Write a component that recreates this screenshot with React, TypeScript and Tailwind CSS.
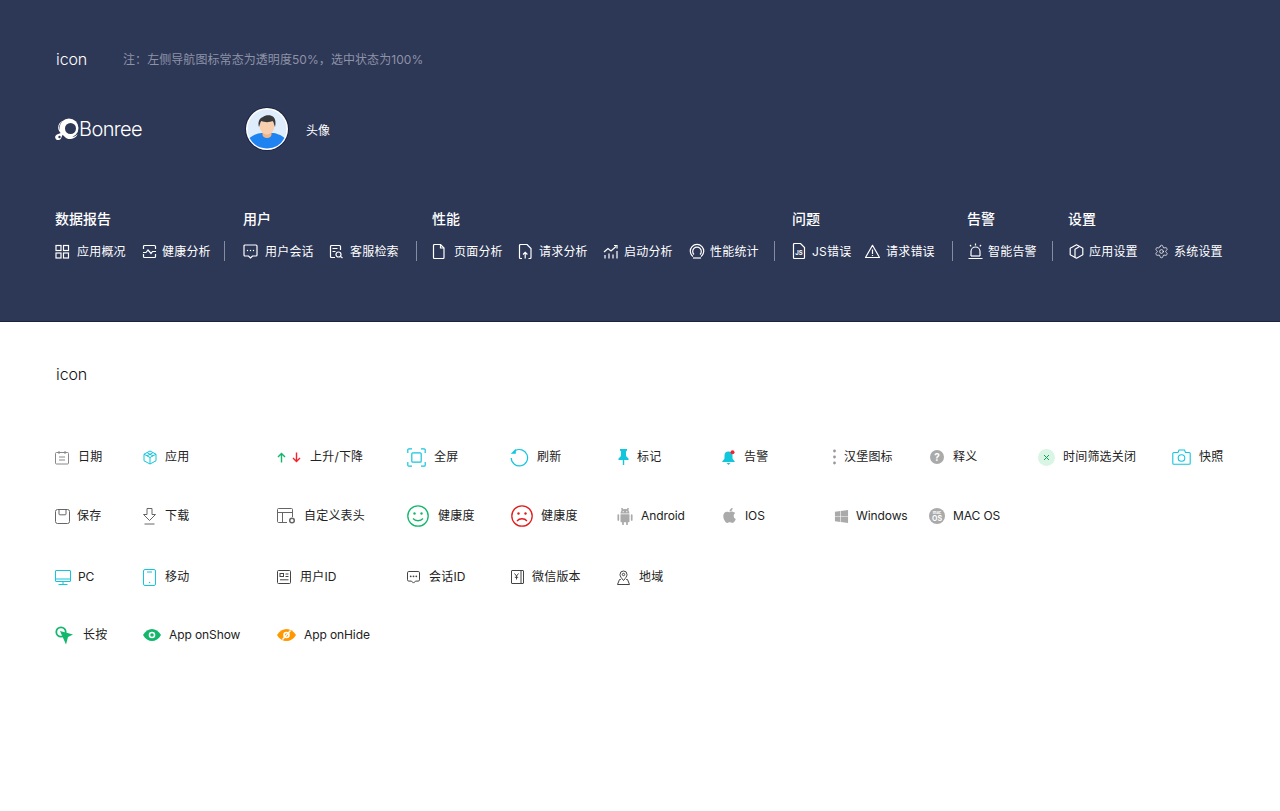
import type { ReactNode } from "react";
import { FaApple, FaWindows } from "react-icons/fa";
import { Settings } from "lucide-react";

const Ico = ({ w = 16, h = 16, vb, children }: { w?: number; h?: number; vb?: string; children: ReactNode }) => (
  <svg width={w} height={h} viewBox={vb ?? `0 0 ${w} ${h}`} fill="none" stroke="currentColor" strokeWidth="1" className="shrink-0">
    {children}
  </svg>
);

const navIcons = {
  grid: (
    <Ico w={15} h={15}>
      <rect x="1" y="1.500" width="5" height="5" />
      <rect x="8.500" y="1.500" width="5" height="5" />
      <rect x="1" y="9" width="5" height="5" />
      <rect x="8.500" y="9" width="5" height="5" />
    </Ico>
  ),
  health: (
    <Ico w={15} h={15}>
      <path d="M1.500 5V2.500a1 1 0 0 1 1-1h10a1 1 0 0 1 1 1V5M1.500 10v2.500a1 1 0 0 0 1 1h10a1 1 0 0 0 1-1V10" />
      <path d="M1 8.500h3l2-2.500 3 3.500 1.500-2H14" />
    </Ico>
  ),
  chat: (
    <Ico w={15} h={15}>
      <path d="M2 1h11a1 1 0 0 1 1 1v9a1 1 0 0 1-1 1H9.500l-2 2-2-2H2a1 1 0 0 1-1-1V2a1 1 0 0 1 1-1z" />
      <circle cx="4.500" cy="6.500" r=".7" fill="currentColor" stroke="none" />
      <circle cx="7.500" cy="6.500" r=".7" fill="currentColor" stroke="none" />
      <circle cx="10.500" cy="6.500" r=".7" fill="currentColor" stroke="none" />
    </Ico>
  ),
  search: (
    <Ico w={15} h={15}>
      <path d="M6 13.500H2.500a1 1 0 0 1-1-1v-10a1 1 0 0 1 1-1h8a1 1 0 0 1 1 1V6" />
      <path d="M3.500 4.500h5M3.500 7.500h3" />
      <circle cx="9.500" cy="10.500" r="2.500" />
      <path d="M11.500 12.500l2 1.500" />
    </Ico>
  ),
  page: (
    <Ico w={14} h={15}>
      <path d="M1.500 1.500a1 1 0 0 1 1-1h6l3.500 3.500v9.500a1 1 0 0 1-1 1h-8.500a1 1 0 0 1-1-1z" />
      <path d="M8.500 .5V4H12" />
    </Ico>
  ),
  upload: (
    <Ico w={15} h={15}>
      <path d="M4 14.500H2.500a1 1 0 0 1-1-1V1.500a1 1 0 0 1 1-1h6.500L13 4.500v9a1 1 0 0 1-1 1h-1.500" />
      <path d="M7.200 14.500V8.500M5 10.500l2.200-2.200 2.200 2.200" />
    </Ico>
  ),
  launch: (
    <Ico w={16} h={15}>
      <path d="M1 8l4-3.500 3 2.500 5-4.500" />
      <path d="M11 1.500h3v3" />
      <path d="M2 11v3.500M6 9.500v5M10 10.500v4M14 7v7.500" />
    </Ico>
  ),
  ring: (
    <Ico w={16} h={16}>
      <path d="M4 13.500A6.700 6.700 0 1 1 12 13.500" />
      <path d="M5 11.500A4.300 4.300 0 1 1 11 11.500" />
      <path d="M4 15h8" />
    </Ico>
  ),
  js: (
    <Ico w={14} h={16}>
      <path d="M1.500 1.500a1 1 0 0 1 1-1h6l4 4v10a1 1 0 0 1-1 1h-9a1 1 0 0 1-1-1z" />
      <text x="3.200" y="12.300" fontSize="6" fontWeight="700" fill="currentColor" stroke="none">JS</text>
    </Ico>
  ),
  warn: (
    <Ico w={15} h={15}>
      <path d="M7.500 1.300L14.500 13.500H.5z" strokeLinejoin="round" />
      <path d="M7.500 5.500v4.500M7.500 11v1" />
    </Ico>
  ),
  alarm: (
    <Ico w={15} h={17}>
      <path d="M3 13V8.500a4.500 4.500 0 0 1 9 0V13" />
      <path d="M.5 15.500h14M7.500 .5v2M2 2l1.200 1.400M13 2l-1.200 1.400" />
      <path d="M3 13h9" />
    </Ico>
  ),
  hex: (
    <Ico w={15} h={15}>
      <path d="M7.500 .8L13.800 4.200V10.800L7.500 14.200 1.200 10.800V4.200z" strokeLinejoin="round" />
      <path d="M10.500 2.500L6 5.300v8.200" />
    </Ico>
  ),
  gear: <Settings size={15} strokeWidth={1.3} className="shrink-0" />,
};

type NavItem = { icon: ReactNode; label: string; box: string };
type NavGroup = { title: string; width: string; items: NavItem[]; sep: boolean };

const groups: NavGroup[] = [
  {
    title: "数据报告",
    width: "w-[188px]",
    sep: true,
    items: [
      { icon: navIcons.grid, label: "应用概况", box: "w-[87px] gap-[7px]" },
      { icon: navIcons.health, label: "健康分析", box: "w-[82px] gap-[5px]" },
    ],
  },
  {
    title: "用户",
    width: "w-[189px]",
    sep: true,
    items: [
      { icon: navIcons.chat, label: "用户会话", box: "w-[86px] gap-[7px]" },
      { icon: navIcons.search, label: "客服检索", box: "w-[87px] gap-[6px]" },
    ],
  },
  {
    title: "性能",
    width: "w-[360px]",
    sep: true,
    items: [
      { icon: navIcons.page, label: "页面分析", box: "w-[86px] gap-[8px]" },
      { icon: navIcons.upload, label: "请求分析", box: "w-[85px] gap-[6px]" },
      { icon: navIcons.launch, label: "启动分析", box: "w-[86px] gap-[5px]" },
      { icon: navIcons.ring, label: "性能统计", box: "w-[85px] gap-[5px]" },
    ],
  },
  {
    title: "问题",
    width: "w-[175px]",
    sep: true,
    items: [
      { icon: navIcons.js, label: "JS错误", box: "w-[73px] gap-[6px]" },
      { icon: navIcons.warn, label: "请求错误", box: "w-[87px] gap-[6px]" },
    ],
  },
  {
    title: "告警",
    width: "w-[101px]",
    sep: true,
    items: [{ icon: navIcons.alarm, label: "智能告警", box: "w-[85px] gap-[5px] pl-[1px]" }],
  },
  {
    title: "设置",
    width: "w-[170px]",
    sep: false,
    items: [
      { icon: navIcons.hex, label: "应用设置", box: "w-[86px] gap-[5px] pl-[1px]" },
      { icon: navIcons.gear, label: "系统设置", box: "w-[85px] gap-[5px]" },
    ],
  },
];

const cyan = "text-[#12c6dc]";

type Cell = { icon: ReactNode; label: string; gap: string; col: string };

const cells: Cell[] = [
  // row 1
  {
    col: "col-start-1",
    label: "日期",
    gap: "gap-[9px]",
    icon: (
      <span className="text-[#888]">
        <Ico w={14} h={15}>
          <rect x=".5" y="2.500" width="13" height="11.500" rx="1" />
          <path d="M4 1v3M10 1v3M4 7h6M4 10h6" />
        </Ico>
      </span>
    ),
  },
  {
    col: "col-start-2",
    label: "应用",
    gap: "gap-[8px]",
    icon: (
      <span className={cyan}>
        <Ico w={14} h={15}>
          <path d="M7 1l6 3.200v6.600L7 14l-6-3.200V4.200z" strokeLinejoin="round" />
          <path d="M1 4.200L7 7.500l6-3.300M7 7.500V14M4 2.600l6 3.300M10 2.600L4 5.900" />
        </Ico>
      </span>
    ),
  },
  {
    col: "col-start-3",
    label: "上升/下降",
    gap: "gap-[9px]",
    icon: (
      <span className="flex w-[24px] items-center justify-between">
        <span className="text-[#12b76a]">
          <Ico w={9} h={11}>
            <path d="M4.500 10.500V1.500M1 5l3.500-3.500L8 5" strokeWidth="1.400" />
          </Ico>
        </span>
        <span className="text-[#f5222d]">
          <Ico w={9} h={11}>
            <path d="M4.500 .5v9M1 6l3.500 3.500L8 6" strokeWidth="1.400" />
          </Ico>
        </span>
      </span>
    ),
  },
  {
    col: "col-start-4",
    label: "全屏",
    gap: "gap-[8px]",
    icon: (
      <span className={cyan}>
        <Ico w={19} h={19}>
          <path d="M.8 5V1.800a1 1 0 0 1 1-1H5M14 .8h3.200a1 1 0 0 1 1 1V5M18.200 14v3.200a1 1 0 0 1-1 1H14M5 18.200H1.800a1 1 0 0 1-1-1V14" strokeWidth="1.200" />
          <rect x="4.800" y="4.800" width="9.400" height="9.400" rx="1" strokeWidth="1.200" />
        </Ico>
      </span>
    ),
  },
  {
    col: "col-start-5",
    label: "刷新",
    gap: "gap-[8px]",
    icon: (
      <span className={cyan}>
        <Ico w={19} h={19}>
          <path d="M5 2.800A8.200 8.200 0 1 1 1.200 10" strokeWidth="1.200" />
          <path d="M.7 5.800L5.800.8v5z" fill="currentColor" stroke="none" />
        </Ico>
      </span>
    ),
  },
  {
    col: "col-start-6",
    label: "标记",
    gap: "gap-[8px]",
    icon: (
      <span className={`${cyan} pl-[1px]`}>
        <Ico w={11} h={16}>
          <path d="M2 0h7v1.500L8 2.500V7l2.500 2.500V11H6.200v5H4.800v-5H.5V9.500L3 7V2.500L2 1.500z" fill="currentColor" stroke="none" />
        </Ico>
      </span>
    ),
  },
  {
    col: "col-start-7",
    label: "告警",
    gap: "gap-[8px]",
    icon: (
      <span className={`${cyan} pl-[1px]`}>
        <Ico w={14} h={15}>
          <path d="M6.500 1.500a4 4 0 0 1 4 4v3l2.500 3.500H0L2.500 8.500v-3a4 4 0 0 1 4-4z" fill="currentColor" stroke="none" />
          <path d="M4.500 13h4L6.500 15z" fill="currentColor" stroke="none" />
          <circle cx="10.500" cy="2.300" r="2" fill="#f5222d" stroke="none" />
        </Ico>
      </span>
    ),
  },
  {
    col: "col-start-8",
    label: "汉堡图标",
    gap: "gap-[8px]",
    icon: (
      <span className="text-[#999]">
        <Ico w={3} h={16}>
          <circle cx="1.500" cy="2" r="1.400" fill="currentColor" stroke="none" />
          <circle cx="1.500" cy="8" r="1.400" fill="currentColor" stroke="none" />
          <circle cx="1.500" cy="14" r="1.400" fill="currentColor" stroke="none" />
        </Ico>
      </span>
    ),
  },
  {
    col: "col-start-9",
    label: "释义",
    gap: "gap-[9px]",
    icon: (
      <span className="ml-[1px] flex size-[14px] items-center justify-center rounded-full bg-[#aaa] text-[10px] leading-none font-bold text-white">
        ?
      </span>
    ),
  },
  {
    col: "col-start-10",
    label: "时间筛选关闭",
    gap: "gap-[8px]",
    icon: (
      <span className="flex size-[17px] items-center justify-center rounded-full bg-[#d9f5e6] text-[#12a150]">
        <Ico w={7} h={7}>
          <path d="M1 1l5 5M6 1L1 6" />
        </Ico>
      </span>
    ),
  },
  {
    col: "col-start-11",
    label: "快照",
    gap: "gap-[8px]",
    icon: (
      <span className={cyan}>
        <Ico w={19} h={16}>
          <path d="M1.800 3.500H6L7 1h5.500l1 2.500h3.700a1 1 0 0 1 1 1v9.700a1 1 0 0 1-1 1H1.800a1 1 0 0 1-1-1V4.500a1 1 0 0 1 1-1z" strokeWidth="1.100" />
          <circle cx="9.500" cy="9" r="3.300" strokeWidth="1.100" />
        </Ico>
      </span>
    ),
  },
  // row 2
  {
    col: "col-start-1",
    label: "保存",
    gap: "gap-[7px]",
    icon: (
      <span className="text-[#666]">
        <Ico w={15} h={15}>
          <rect x=".5" y=".5" width="14" height="14" rx="2" />
          <path d="M4 .5V5a.8.8 0 0 0 .8.8h5.400a.8.8 0 0 0 .8-.8V.5" />
        </Ico>
      </span>
    ),
  },
  {
    col: "col-start-2",
    label: "下载",
    gap: "gap-[9px]",
    icon: (
      <span className="text-[#666]">
        <Ico w={13} h={17}>
          <path d="M4 .5h5v6h3.500L6.500 12.500.5 6.500H4z" strokeLinejoin="round" />
          <path d="M1.500 16h10" />
        </Ico>
      </span>
    ),
  },
  {
    col: "col-start-3",
    label: "自定义表头",
    gap: "gap-[8px]",
    icon: (
      <span className="text-[#666]">
        <Ico w={19} h={16}>
          <path d="M10 14.500H1.500a1 1 0 0 1-1-1v-12a1 1 0 0 1 1-1h13a1 1 0 0 1 1 1V9" />
          <path d="M.5 4.500h15M5.500 4.500v10" />
          <circle cx="15" cy="12.500" r="2.300" strokeWidth="1.500" />
        </Ico>
      </span>
    ),
  },
  {
    col: "col-start-4",
    label: "健康度",
    gap: "gap-[9px]",
    icon: (
      <span className="text-[#12b76a]">
        <Ico w={22} h={22}>
          <circle cx="11" cy="11" r="10.200" strokeWidth="1.300" />
          <circle cx="7.500" cy="8.500" r="1.200" fill="currentColor" stroke="none" />
          <circle cx="14.500" cy="8.500" r="1.200" fill="currentColor" stroke="none" />
          <path d="M6 13.500c2.500 3 7.500 3 10 0" strokeWidth="1.300" />
        </Ico>
      </span>
    ),
  },
  {
    col: "col-start-5",
    label: "健康度",
    gap: "gap-[8px]",
    icon: (
      <span className="pl-[1px] text-[#e21b1b]">
        <Ico w={22} h={22}>
          <circle cx="11" cy="11" r="10.200" strokeWidth="1.300" />
          <circle cx="7.500" cy="8.500" r="1.200" fill="currentColor" stroke="none" />
          <circle cx="14.500" cy="8.500" r="1.200" fill="currentColor" stroke="none" />
          <path d="M6 16c2.500-3 7.500-3 10 0" strokeWidth="1.300" />
        </Ico>
      </span>
    ),
  },
  {
    col: "col-start-6",
    label: "Android",
    gap: "gap-[8px]",
    icon: (
      <span className="text-[#aaa]">
        <Ico w={16} h={17}>
          <path d="M3.500 5.500a4.500 4.500 0 0 1 9 0z" fill="currentColor" stroke="none" />
          <path d="M3.500 6.300h9v7.200a.8.8 0 0 1-.8.8H4.300a.8.8 0 0 1-.8-.8z" fill="currentColor" stroke="none" />
          <path d="M1.300 7v5M14.700 7v5M6 14v2.300M10 14v2.300M5 .8l1.300 2M11 .8L9.700 2.800" strokeWidth="1.700" strokeLinecap="round" />
          <circle cx="6.200" cy="3.700" r=".6" fill="#fff" stroke="none" />
          <circle cx="9.800" cy="3.700" r=".6" fill="#fff" stroke="none" />
        </Ico>
      </span>
    ),
  },
  {
    col: "col-start-7",
    label: "IOS",
    gap: "gap-[7px]",
    icon: <FaApple size={17} className="-mt-[1px] text-[#aaa]" />,
  },
  {
    col: "col-start-8",
    label: "Windows",
    gap: "gap-[7px]",
    icon: <FaWindows size={15} className="ml-[1px] text-[#aaa]" />,
  },
  {
    col: "col-start-9",
    label: "MAC OS",
    gap: "gap-[8px]",
    icon: (
      <span className="flex size-[16px] flex-col items-center justify-center rounded-full bg-[#aaa] font-bold text-white">
        <span className="text-[4px] leading-[4px]">mac</span>
        <span className="text-[7px] leading-[7px]">OS</span>
      </span>
    ),
  },
  // row 3
  {
    col: "col-start-1",
    label: "PC",
    gap: "gap-[7px]",
    icon: (
      <span className={cyan}>
        <Ico w={16} h={15}>
          <rect x=".5" y=".5" width="15" height="11" rx=".5" />
          <path d="M.5 9h15M8 11.500V14M3.500 14.500h9" />
        </Ico>
      </span>
    ),
  },
  {
    col: "col-start-2",
    label: "移动",
    gap: "gap-[9px]",
    icon: (
      <span className={cyan}>
        <Ico w={13} h={17}>
          <rect x=".5" y=".5" width="12" height="16" rx="1.500" />
          <path d="M4 3h5" />
          <circle cx="6.500" cy="13.500" r=".7" fill="currentColor" stroke="none" />
        </Ico>
      </span>
    ),
  },
  {
    col: "col-start-3",
    label: "用户ID",
    gap: "gap-[9px]",
    icon: (
      <span className="text-[#444]">
        <Ico w={14} h={14}>
          <rect x=".5" y=".5" width="13" height="13" rx="1" />
          <rect x="3" y="3.500" width="3.500" height="3" />
          <path d="M8.500 4h3M8.500 6.500h3M3 9.800h8.500" />
        </Ico>
      </span>
    ),
  },
  {
    col: "col-start-4",
    label: "会话ID",
    gap: "gap-[9px]",
    icon: (
      <span className="text-[#444]">
        <Ico w={13} h={13}>
          <path d="M1.800.5h9.400a1.300 1.300 0 0 1 1.300 1.300v7a1.300 1.300 0 0 1-1.300 1.300H8.500l-2 2-2-2H1.800A1.300 1.300 0 0 1 .5 8.800v-7A1.300 1.300 0 0 1 1.800.5z" />
          <circle cx="3.700" cy="5.300" r=".9" fill="currentColor" stroke="none" />
          <circle cx="6.500" cy="5.300" r=".9" fill="currentColor" stroke="none" />
          <circle cx="9.300" cy="5.300" r=".9" fill="currentColor" stroke="none" />
        </Ico>
      </span>
    ),
  },
  {
    col: "col-start-5",
    label: "微信版本",
    gap: "gap-[8px]",
    icon: (
      <span className="pl-[1px] text-[#444]">
        <Ico w={13} h={14}>
          <rect x=".5" y=".5" width="12" height="13" rx=".5" />
          <path d="M3.500 3.500l2 2.500 2-2.500M5.500 6v3.500M3.800 7.300h3.400M10 .5v13" />
        </Ico>
      </span>
    ),
  },
  {
    col: "col-start-6",
    label: "地域",
    gap: "gap-[9px]",
    icon: (
      <span className="text-[#444]">
        <Ico w={13} h={15}>
          <path d="M6.500 10.500C4.500 8 3 6.500 3 4.500a3.500 3.500 0 0 1 7 0c0 2-1.500 3.500-3.500 6z" />
          <circle cx="6.500" cy="4.500" r="1.200" />
          <path d="M3.800 9.500H2.500L.5 14.500h12l-2-5H9.200" />
        </Ico>
      </span>
    ),
  },
  // row 4
  {
    col: "col-start-1",
    label: "长按",
    gap: "gap-[9px]",
    icon: (
      <span className="text-[#12b76a]">
        <Ico w={19} h={19}>
          <circle cx="6" cy="6" r="4.700" strokeWidth="1.800" />
          <path d="M5 5l13 3.500-5 2.500-2 7.500z" fill="currentColor" stroke="none" />
        </Ico>
      </span>
    ),
  },
  {
    col: "col-start-2",
    label: "App onShow",
    gap: "gap-[8px]",
    icon: (
      <span className="text-[#12b76a]">
        <Ico w={18} h={12}>
          <path d="M0 6c4.500-8 13.500-8 18 0-4.500 8-13.500 8-18 0z" fill="currentColor" stroke="none" />
          <circle cx="9" cy="6" r="3.300" fill="#fff" stroke="none" />
          <circle cx="9" cy="6" r="1.800" fill="currentColor" stroke="none" />
        </Ico>
      </span>
    ),
  },
  {
    col: "col-start-3",
    label: "App onHide",
    gap: "gap-[8px]",
    icon: (
      <span className="text-[#ff9800]">
        <Ico w={19} h={12}>
          <path d="M0 6c4.500-8 14.500-8 19 0-4.500 8-14.500 8-19 0z" fill="currentColor" stroke="none" />
          <circle cx="9.500" cy="6" r="3.300" fill="#fff" stroke="none" />
          <circle cx="9.500" cy="6" r="1.700" fill="currentColor" stroke="none" />
          <path d="M5.500 10.500l8-9" stroke="#fff" strokeWidth="1.300" />
        </Ico>
      </span>
    ),
  },
];

const Logo = () => (
  <svg width="25" height="23" viewBox="0 0 25 23" className="shrink-0">
    <circle cx="14" cy="10" r="9.500" fill="#fff" />
    <circle cx="15.500" cy="10.500" r="5.500" fill="#2d3756" />
    <path d="M8.500 2.500C5 4.500 3.500 8 4.500 11c.8 2 2.500 3 4 3.500L6 20.500c-1.500 2-4.500 2-5.500 0-1-2 .2-3.500 2-4.300l3.300-1.300C1.500 11.500 2.500 4.500 8.500 2.500z" fill="#fff" />
    <path d="M7 13l7.500 5.500c3 .7 6 .2 8-2.500-.7 3.500-4.500 5-8 5-3.500 0-6-2.500-7.500-8z" fill="#fff" />
    <circle cx="4.500" cy="19" r="1.200" fill="#2d3756" />
  </svg>
);

const Avatar = () => (
  <svg width="44" height="44" viewBox="0 0 44 44" className="shrink-0">
    <circle cx="22" cy="22" r="22" fill="#1c2340" />
    <circle cx="22" cy="22" r="21" fill="#fff" />
    <circle cx="22" cy="22" r="19.500" fill="#deecfb" />
    <path d="M4.500 31c3-3 9-5 12-5h11c3 0 9 2 12 5A20 20 0 0 1 22 41.500 20 20 0 0 1 4.500 31z" fill="#1e82f0" />
    <path d="M17.500 23h9v4.500c0 2-2 3.500-4.500 3.500s-4.500-1.500-4.500-3.500z" fill="#eeb58c" />
    <ellipse cx="22" cy="19" rx="7.500" ry="8.500" fill="#f8cfae" />
    <path d="M14 20c-1.500-5 .5-9 4-10 2-2 8-2.500 10.500 0 2 2 2.500 6 1.500 10-1-2-1-5-2.500-6-3 1.500-8 1.500-11 0-1.500 1-1.500 4-2.500 6z" fill="#38393d" />
  </svg>
);

const isLatin = (s: string) => /^[\x00-\x7f]+$/.test(s);

export default function App() {
  return (
    <div className="min-h-[811px] bg-white font-['Inter','Noto_Sans_CJK_SC',sans-serif] text-[12px]">
      <div className="flex h-[322px] flex-col border-b border-[#1c2340] bg-[#2d3756] pl-[55px]">
        <div className="mt-[49px] flex h-[20px] items-center">
          <span className="w-[68px] pl-[1px] text-[16px] font-light tracking-[-0.1px] text-white">icon</span>
          <span className="pt-[2px] tracking-[0.07px] text-[#8d93a6]">注：左侧导航图标常态为透明度50%，选中状态为100%</span>
        </div>
        <div className="mt-[38px] flex h-[44px] items-center">
          <div className="flex w-[190px] items-center">
            <Logo />
            <span className="-ml-[1px] text-[20px] leading-none font-light tracking-[-0.6px] text-white">Bonree</span>
          </div>
          <div className="-mt-[1px]">
            <Avatar />
          </div>
          <span className="ml-[17px] pt-[3px] text-white">头像</span>
        </div>
        <div className="mt-[57px] flex">
          {groups.map((g) => (
            <div key={g.title} className={g.width}>
              <div className="flex h-[20px] items-center text-[14px] font-medium text-white">{g.title}</div>
              <div className="mt-[13px] flex h-[20px] items-center">
                {g.items.map((it) => (
                  <div key={it.label} className={`flex shrink-0 items-center text-white [&_svg]:stroke-[1.2] ${it.box}`}>
                    {it.icon}
                    <span className="pt-[1px] tracking-[0.2px] whitespace-nowrap">{it.label}</span>
                  </div>
                ))}
                {g.sep && <div className="h-[20px] w-px bg-[#868c9f]" />}
              </div>
            </div>
          ))}
        </div>
      </div>

      <div className="pl-[55px]">
        <div className="mt-[42px] flex h-[20px] items-center pl-[1px] text-[16px] font-light tracking-[-0.1px] text-[#111]">icon</div>
        <div className="mt-[58px] grid grid-cols-[88px_134px_130px_103px_107px_104px_112px_96px_109px_134px_auto] grid-rows-[59px_61px_58px_30px]">
          {cells.map((c, i) => (
            <div key={i} className={`flex h-[30px] items-center whitespace-nowrap text-[#222] ${c.col} ${c.gap}`}>
              {c.icon}
              <span className={isLatin(c.label) ? "tracking-[-0.1px]" : "tracking-[0.2px]"}>{c.label}</span>
            </div>
          ))}
        </div>
      </div>
    </div>
  );
}
